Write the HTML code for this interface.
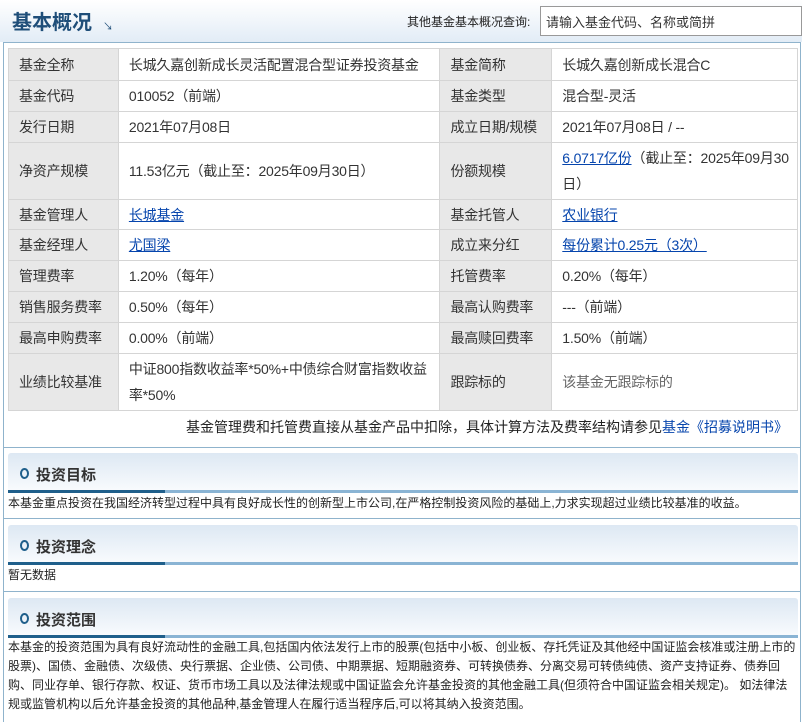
<!DOCTYPE html><html><head><meta charset="utf-8"><style>
*{margin:0;padding:0;box-sizing:border-box}
body{width:802px;height:722px;background:#fff;font-family:"Liberation Sans","Noto Sans CJK SC",sans-serif;color:#333;position:relative;overflow:hidden}
.hd{position:absolute;left:0;top:0;width:802px;height:42px;background:linear-gradient(#fff,#e2ecf6)}
.hd h1{position:absolute;left:12px;top:6px;font-size:20px;color:#1f4e79;font-weight:bold}
.hd .ar{position:absolute;left:103px;top:18px;font-size:10px;color:#1f4e79}
.hd .q{position:absolute;left:407px;top:13px;font-size:12px;color:#222}
.hd input{position:absolute;left:540px;top:6px;width:262px;height:30px;border:1px solid #999;font:13px "Liberation Sans","Noto Sans CJK SC",sans-serif;padding-left:5px;color:#333}
.box{position:absolute;left:3px;top:42px;width:798px;height:680px;border:1px solid #8fb3cc;border-bottom:none}
table{position:absolute;left:8px;top:48px;width:790px;border-collapse:collapse;font-size:14px;letter-spacing:-0.2px}
td{border:1px solid #d5d5d5;padding:0 2px 0 10px;line-height:26px;vertical-align:middle}
td.l{background:#e8e8e8;color:#333}
td a{color:#0645ad;text-decoration:underline}
.note{position:absolute;right:14px;top:417px;font-size:14px;color:#222}
.note a{color:#0645ad}
.hr{position:absolute;left:3px;width:798px;height:1px;background:#8fb3cc}
.sh{position:absolute;left:8px;width:790px;height:40px;background:linear-gradient(#dde8f3,#fafcfe);border-radius:3px 3px 0 0}
.sh span{position:absolute;left:28px;top:11px;font-size:15px;font-weight:bold;color:#333}
.sh i{position:absolute;left:12px;top:15px;width:9px;height:11px;border:2px solid #1f5f8b;border-radius:50%}
.sh b{position:absolute;left:0;bottom:0;height:3px;width:100%;background:#8ab4d4}
.sh b:before{content:"";position:absolute;left:0;top:0;width:157px;height:3px;background:#1f5f8b}
.tx{position:absolute;left:8px;width:790px;font-size:12px;color:#222;line-height:19px}
</style></head><body>
<div class="hd"><h1>基本概况</h1><span class="ar">↘</span><span class="q">其他基金基本概况查询:</span><input value="请输入基金代码、名称或简拼"></div>
<div class="box"></div>
<table>
<colgroup><col style="width:110px"><col style="width:322px"><col style="width:112px"><col style="width:246px"></colgroup>
<tr style="height:32px"><td class="l">基金全称</td><td>长城久嘉创新成长灵活配置混合型证券投资基金</td><td class="l">基金简称</td><td>长城久嘉创新成长混合C</td></tr>
<tr style="height:31px"><td class="l">基金代码</td><td>010052（前端）</td><td class="l">基金类型</td><td>混合型-灵活</td></tr>
<tr style="height:31px"><td class="l">发行日期</td><td>2021年07月08日</td><td class="l">成立日期/规模</td><td>2021年07月08日 / --</td></tr>
<tr style="height:57px"><td class="l">净资产规模</td><td>11.53亿元（截止至：2025年09月30日）</td><td class="l">份额规模</td><td><a>6.0717亿份</a>（截止至：2025年09月30日）</td></tr>
<tr style="height:30px"><td class="l">基金管理人</td><td><a>长城基金</a></td><td class="l">基金托管人</td><td><a>农业银行</a></td></tr>
<tr style="height:31px"><td class="l">基金经理人</td><td><a>尤国梁</a></td><td class="l">成立来分红</td><td><a>每份累计0.25元（3次）</a></td></tr>
<tr style="height:31px"><td class="l">管理费率</td><td>1.20%（每年）</td><td class="l">托管费率</td><td>0.20%（每年）</td></tr>
<tr style="height:31px"><td class="l">销售服务费率</td><td>0.50%（每年）</td><td class="l">最高认购费率</td><td>---（前端）</td></tr>
<tr style="height:31px"><td class="l">最高申购费率</td><td>0.00%（前端）</td><td class="l">最高赎回费率</td><td>1.50%（前端）</td></tr>
<tr style="height:57px"><td class="l">业绩比较基准</td><td>中证800指数收益率*50%+中债综合财富指数收益率*50%</td><td class="l">跟踪标的</td><td style="color:#666">该基金无跟踪标的</td></tr>
</table>
<div class="note">基金管理费和托管费直接从基金产品中扣除，具体计算方法及费率结构请参见<a>基金《招募说明书》</a></div>
<div class="hr" style="top:447px"></div>
<div class="sh" style="top:453px"><i></i><span>投资目标</span><b></b></div>
<div class="tx" style="top:494px">本基金重点投资在我国经济转型过程中具有良好成长性的创新型上市公司,在严格控制投资风险的基础上,力求实现超过业绩比较基准的收益。</div>
<div class="hr" style="top:518px"></div>
<div class="sh" style="top:525px"><i></i><span>投资理念</span><b></b></div>
<div class="tx" style="top:566px">暂无数据</div>
<div class="hr" style="top:591px"></div>
<div class="sh" style="top:598px"><i></i><span>投资范围</span><b></b></div>
<div class="tx" style="top:638px">本基金的投资范围为具有良好流动性的金融工具,包括国内依法发行上市的股票(包括中小板、创业板、存托凭证及其他经中国证监会核准或注册上市的股票)、国债、金融债、次级债、央行票据、企业债、公司债、中期票据、短期融资券、可转换债券、分离交易可转债纯债、资产支持证券、债券回购、同业存单、银行存款、权证、货币市场工具以及法律法规或中国证监会允许基金投资的其他金融工具(但须符合中国证监会相关规定)。 如法律法规或监管机构以后允许基金投资的其他品种,基金管理人在履行适当程序后,可以将其纳入投资范围。</div>
</body></html>
